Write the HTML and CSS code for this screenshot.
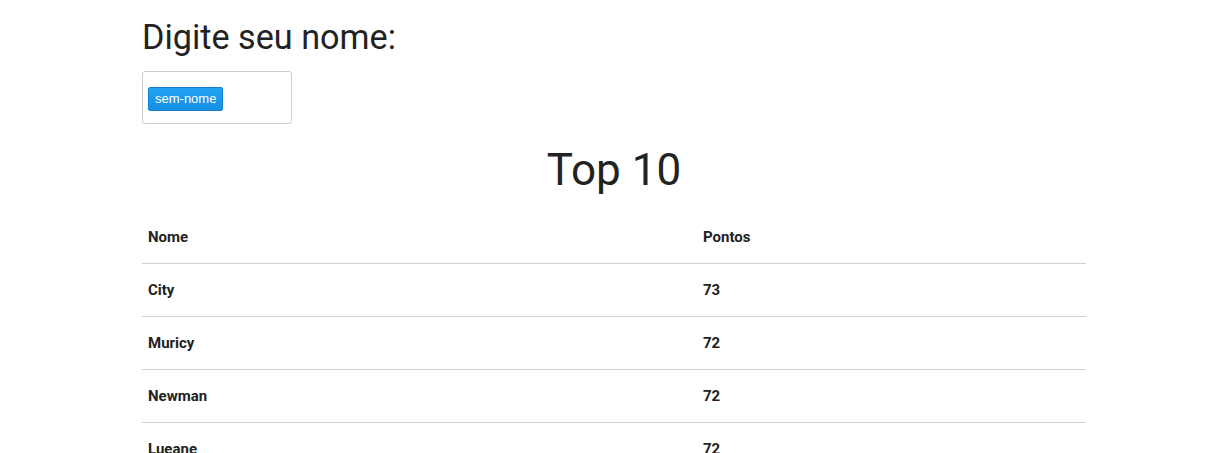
FILE: index.html
```html
<!DOCTYPE html>
<html lang="pt">
<head>
<meta charset="utf-8">
<title>Top 10</title>
<link rel="stylesheet" href="styles.css">
</head>
<body>
<div class="container">
  <h4 class="prompt">Digite seu nome:</h4>
  <div class="tag-input">
    <span class="tag">sem-nome</span>
  </div>
  <h3 class="title">Top 10</h3>
  <table class="ranking">
    <thead>
      <tr><th class="col-name">Nome</th><th>Pontos</th></tr>
    </thead>
    <tbody>
      <tr><td>City</td><td>73</td></tr>
      <tr><td>Muricy</td><td>72</td></tr>
      <tr><td>Newman</td><td>72</td></tr>
      <tr><td>Lueane</td><td>72</td></tr>
      <tr><td>Ana</td><td>70</td></tr>
    </tbody>
  </table>
</div>
</body>
</html>
```
FILE: styles.css
```css
html, body {
  margin: 0;
  padding: 0;
  background: #fff;
}
body {
  font-family: Roboto, "Liberation Sans", sans-serif;
  color: #222;
}
.container {
  width: 944px;
  margin: 0 0 0 142px;
}
.prompt {
  font-size: 34.2px;
  font-weight: 400;
  line-height: 110%;
  margin: 19px 0 14px 0;
}
.tag-input {
  box-sizing: border-box;
  width: 150px;
  height: 53px;
  border: 1px solid #ccc;
  border-radius: 3px;
  padding: 15px 5px 0 5px;
}
.tag {
  display: inline-block;
  box-sizing: border-box;
  height: 24px;
  padding: 0 6px;
  font-family: "Liberation Sans", Arial, sans-serif;
  font-size: 13px;
  line-height: 22px;
  color: #fff;
  background: linear-gradient(#22a2f2, #168fe3);
  border: 1px solid #1580d0;
  border-radius: 2px;
}
.title {
  font-size: 44px;
  font-weight: 400;
  line-height: 48px;
  text-align: center;
  margin: 22px 0 17px 0;
}
.ranking {
  width: 944px;
  border-collapse: collapse;
  font-size: 15px;
  font-weight: 700;
}
.ranking th, .ranking td {
  padding: 15px 6px;
  line-height: 22px;
  text-align: left;
  vertical-align: middle;
}
.ranking tr {
  border-bottom: 1px solid #d0d0d0;
}
.col-name {
  width: 543px;
}
```
